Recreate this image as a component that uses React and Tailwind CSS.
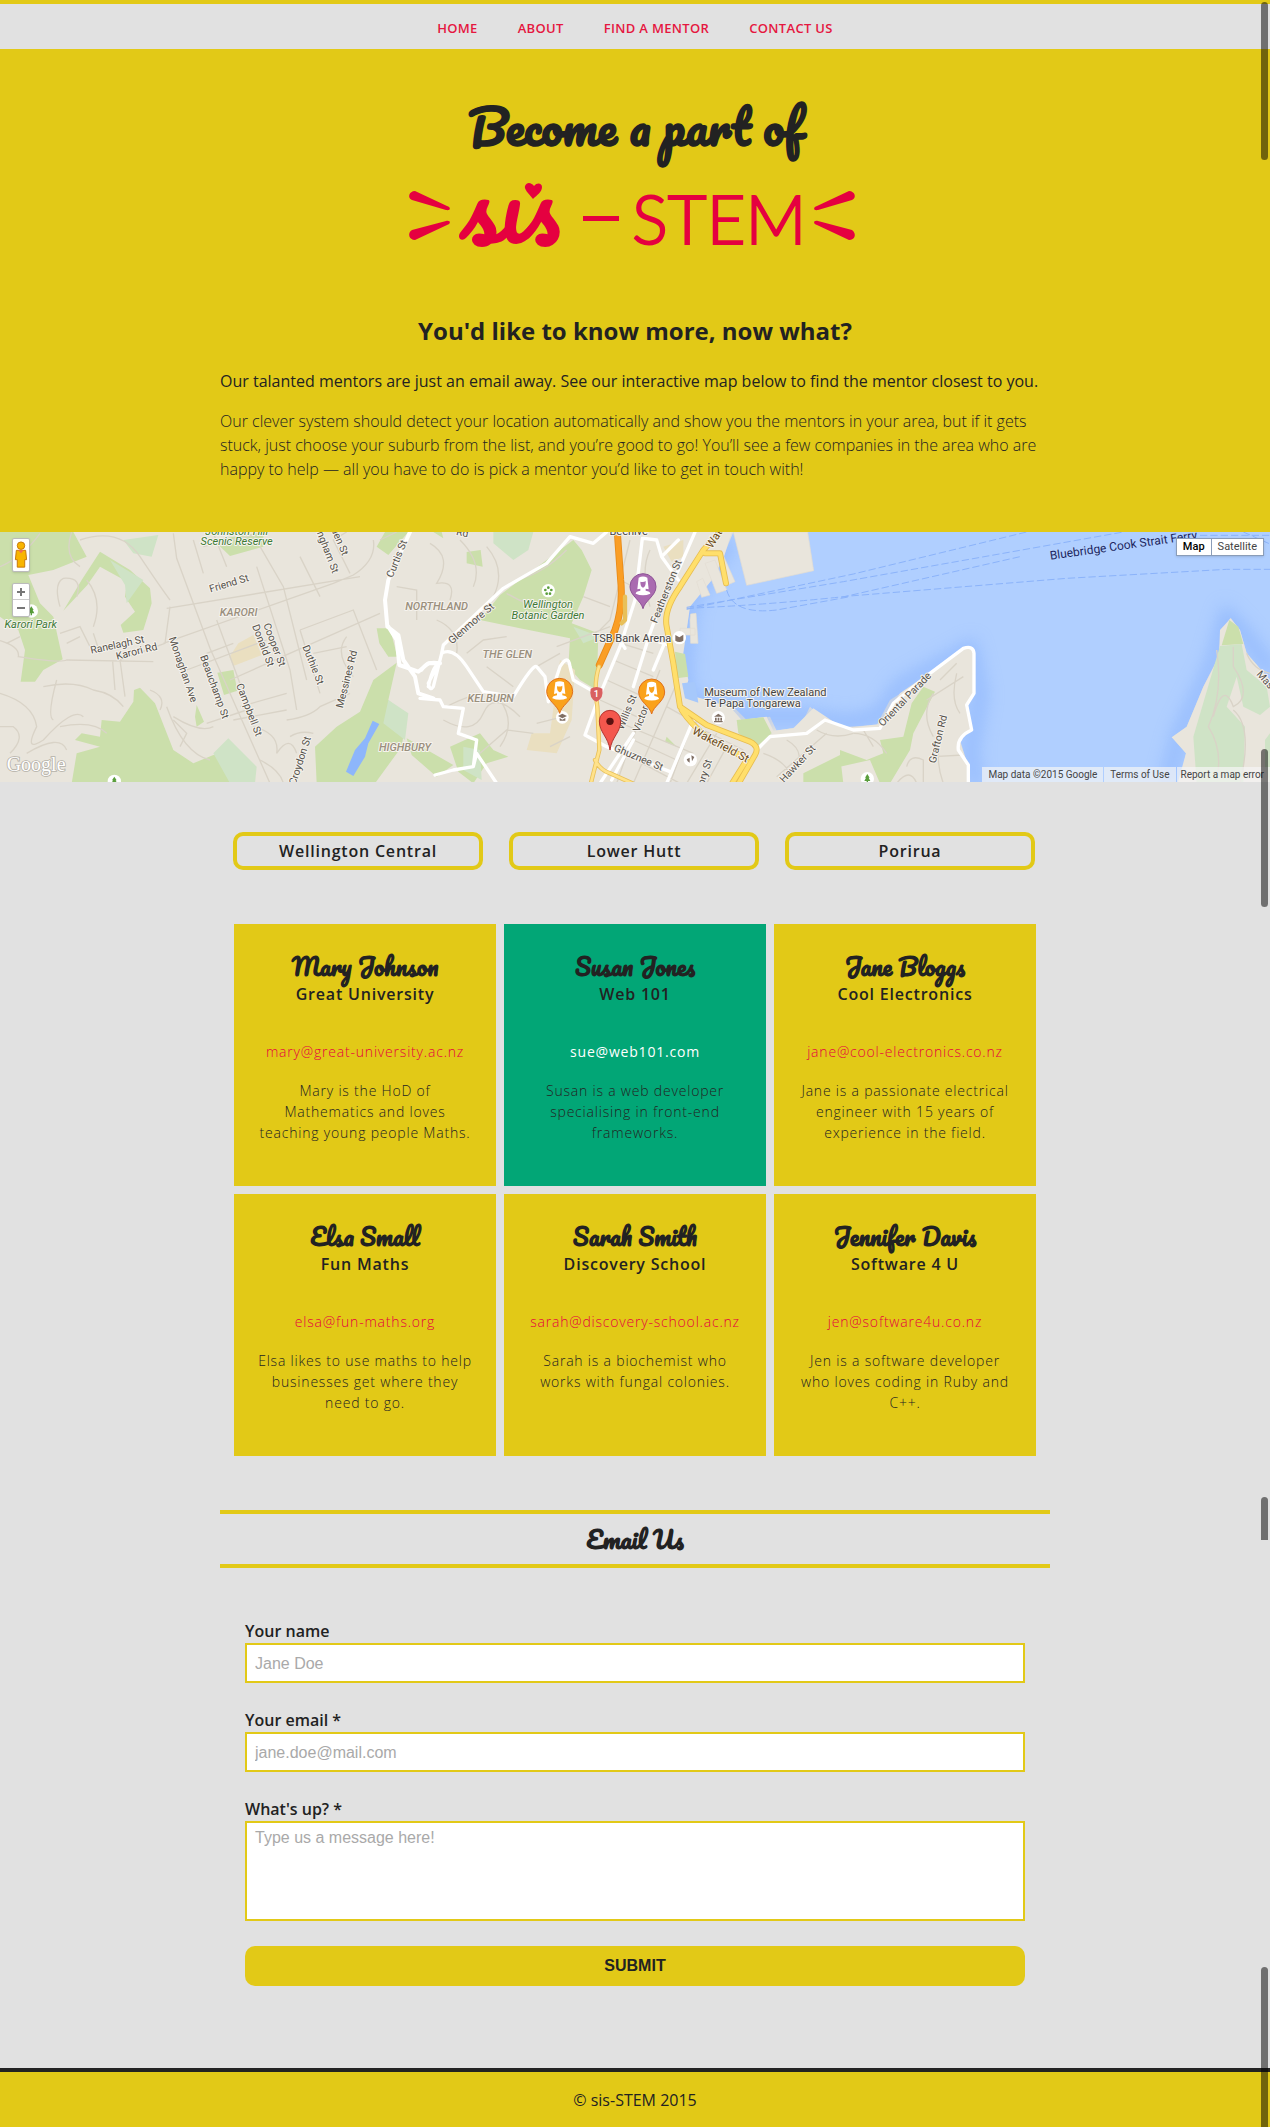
import React from "react";

const NAV = ["Home", "About", "Find a mentor", "Contact us"];
const AREAS = ["Wellington Central", "Lower Hutt", "Porirua"];
const MENTORS = [
  { name: "Mary Johnson", org: "Great University", email: "mary@great-university.ac.nz", bio: "Mary is the HoD of Mathematics and loves teaching young people Maths." },
  { name: "Susan Jones", org: "Web 101", email: "sue@web101.com", bio: "Susan is a web developer specialising in front-end frameworks.", active: true },
  { name: "Jane Bloggs", org: "Cool Electronics", email: "jane@cool-electronics.co.nz", bio: "Jane is a passionate electrical engineer with 15 years of experience in the field." },
  { name: "Elsa Small", org: "Fun Maths", email: "elsa@fun-maths.org", bio: "Elsa likes to use maths to help businesses get where they need to go." },
  { name: "Sarah Smith", org: "Discovery School", email: "sarah@discovery-school.ac.nz", bio: "Sarah is a biochemist who works with fungal colonies." },
  { name: "Jennifer Davis", org: "Software 4 U", email: "jen@software4u.co.nz", bio: "Jen is a software developer who loves coding in Ruby and C++." },
];

const SCRIPT = "font-['Pacifico','Liberation_Serif',serif] font-bold tracking-normal";

function Logo() {
  return (
    <svg viewBox="0 0 454 68" className="h-[68px] w-[454px] overflow-visible" role="img" aria-label="sis-STEM" fill="#e50040">
      <path d="M7 8 C1 8 -1 15 4 17 L38 27 C43 28 43 24 39 23 Z" />
      <path d="M7 57 C1 57 -1 50 4 47 L38 38 C43 37 43 41 39 42 Z" />
      <path d="M441 8 C447 8 449 15 444 17 L410 27 C405 28 405 24 409 23 Z" />
      <path d="M441 57 C447 57 449 51 444 47 L410 38 C405 37 405 41 409 42 Z" />
      <path d="M125 16 C120 10 116 6 117 3 C119 -2 124 0 126 3 C129 -1 134 0 134 4 C134 9 129 12 125 16 Z" />
      <rect x="175" y="33" width="36" height="5" />
      <text x="52" y="61" fontSize="94" fontFamily="Pacifico, 'Liberation Serif', serif">sıs</text>
      <text x="224" y="61" fontSize="67" fontFamily="Lato, sans-serif" fontWeight="300" stroke="#e50040" strokeWidth="2">STEM</text>
    </svg>
  );
}

const WEST_LABELS = [
  [710, 46, 0, "Johnston Hill", "park"], [710, 76, 0, "Scenic Reserve", "park"],
  [92, 325, 0, "Karori Park", "park"], [716, 288, 0, "KARORI", "area"],
  [690, 200, -17, "Friend St"], [354, 384, -12, "Ranelagh St"], [412, 404, -14, "Karori Rd"],
  [540, 452, 71, "Monaghan Ave"], [634, 504, 70, "Beauchamp St"], [738, 573, 69, "Campbell St"],
  [780, 380, 69, "Donald St"], [814, 378, 69, "Cooper St"], [930, 438, 68, "Duthie St"],
  [1050, 480, -76, "Messines Rd"], [910, 725, -72, "Croydon St"], [974, 100, 69, "ngham St"],
  [1010, 68, 67, "den St"], [1200, 120, -68, "Curtis St"],
];
const CENTRE_LABELS = [
  [50, 270, 0, "NORTHLAND", "area"], [262, 414, 0, "THE GLEN", "area"], [212, 547, 0, "KELBURN", "area"],
  [-45, 694, 0, "HIGHBURY", "area"], [384, 265, 0, "Wellington", "park"], [384, 298, 0, "Botanic Garden", "park"],
  [160, 318, -41, "Glenmore St"], [748, 218, -68, "Featherston St"], [636, 365, 0, "TSB Bank Arena", "place"],
  [1036, 528, 0, "Museum of New Zealand", "place"], [998, 560, 0, "Te Papa Tongarewa", "place"],
  [630, 580, -68, "Willis St"], [672, 600, -70, "Victor"], [652, 722, 23, "Ghuznee St"],
  [897, 684, 28, "Wakefield St", "road"], [892, 62, -58, "Wat", "road"], [626, 44, 0, "Beehive", "place"],
  [125, 48, 12, "Rd"], [864, 760, -72, "ory St"], [1140, 738, -47, "Hawker St"],
];
const EAST_LABELS = [
  [202, 545, -46, "Oriental Parade"], [304, 660, -76, "Grafton Rd"],
  [852, 88, -8, "Bluebridge Cook Strait Ferry", "sea"], [1268, 486, 48, "Mas"],
];
const LABEL_STYLE = {
  street: { fill: "#55514a", size: 31 },
  area: { fill: "#9a8f7d", size: 33, italic: true, weight: 500 },
  park: { fill: "#3d7a35", size: 33, italic: true },
  place: { fill: "#444444", size: 33 },
  road: { fill: "#6b4a14", size: 34 },
  sea: { fill: "#1c2660", size: 36 },
};

function Labels({ items }) {
  return items.map(([x, y, r, text, kind = "street"]) => {
    const s = LABEL_STYLE[kind];
    return (
      <text key={text + x} transform={`translate(${x} ${y}) rotate(${r})`} textAnchor="middle" fontSize={s.size}
        fontStyle={s.italic ? "italic" : "normal"} fontWeight={s.weight || 400} fill={s.fill}
        stroke={kind === "sea" ? "#b3d1ff" : "#f6f3ee"} strokeWidth="6" strokeLinejoin="round" paintOrder="stroke">{text}</text>
    );
  });
}

function MentorPin({ x, y, fill, edge }) {
  return (
    <g transform={`translate(${x} ${y})`}>
      <path d="M0 64 C-5 40 -39 26 -39 -2 A39 39 0 0 1 39 -2 C39 26 5 40 0 64Z" fill={fill} stroke={edge} strokeWidth="3" />
      <path d="M-13 -29 Q0 -36 13 -29 L17 6 L8 4 L8 10 Q22 12 22 19 Q0 28 -22 19 Q-22 12 -8 10 L-8 4 L-17 6Z" fill="#fff" />
      <path d="M-8 -17 Q3 -15 8 -19 Q9 -2 0 1 Q-8 -1 -8 -17Z" fill={fill} />
    </g>
  );
}

function Tree({ x, y }) {
  return (
    <g transform={`translate(${x} ${y})`}>
      <circle r="20" fill="#fff" />
      <path d="M0 -14 L7 -3 H4 L9 7 H2 V13 H-2 V7 H-9 L-4 -3 H-7Z" fill="#5a9e3c" />
    </g>
  );
}

function MapDrawing() {
  return (
    <svg viewBox="0 36 3810 750" preserveAspectRatio="xMidYMid slice" className="block h-full w-full" fontFamily="Roboto, sans-serif" role="img" aria-label="Map of Wellington mentors">
      <defs>
        <filter id="shore" x="-20%" y="-20%" width="140%" height="140%"><feGaussianBlur stdDeviation="26" /></filter>
      </defs>
      <rect y="36" width="3810" height="750" fill="#e9e5dc" />

      {/* harbour */}
      <path d="M2200 36 L2170 110 L2140 170 L2070 250 L2060 330 L2040 390 L2040 430 L2060 480 L2040 540 L2100 560 L2200 560 L2240 600 L2310 590 L2330 632 L2400 620 L2430 560 L2480 605 L2540 620 L2630 615 L2670 540 L2790 465 L2850 420 L2900 378 L2925 390 L2920 520 L2900 560 L2915 630 L2880 660 L2905 740 L2905 790 L3540 790 L3558 700 L3517 652 L3560 620 L3610 500 L3655 410 L3665 330 L3692 293 L3720 330 L3740 400 L3810 480 L3810 36Z" fill="#b0cfff" />
      <g fill="none" stroke="#77a5fb" strokeWidth="42" opacity="0.5" filter="url(#shore)">
        <path d="M2190 60 L2070 250 L2050 440 L2060 540 L2240 590 L2420 590 L2540 610 L2640 590 L2700 500 L2910 385 L2940 520 L2910 700 L2930 800" />
        <path d="M3500 800 L3540 640 L3640 430 L3680 290 L3730 340 L3820 460" />
      </g>
      <path d="M2030 36 H2195 L2172 110 L2140 175 L2070 260 L2060 330 L2050 400 L2065 480 L2050 540 H1980 V36Z" fill="#e9e5dc" />
      <path d="M2905 800 L2905 740 L2878 660 L2915 630 L2900 560 L2925 520 L2925 390 L2900 378 L2850 420 L2780 465 L2700 520 L2640 612 L2530 625 L2440 565 L2380 625 L2320 632 L2300 590 L2225 600 L2190 560 L2050 520 L1980 500 V800Z" fill="#e9e5dc" />
      <path d="M3530 800 L3558 700 L3515 652 L3560 620 L3610 500 L3657 410 L3660 330 L3692 295 L3720 330 L3740 400 L3810 480 V800Z" fill="#e9e5dc" />
      <g fill="#e9e5dc" stroke="#e2ddd2" strokeWidth="2">
        <path d="M2200 36 H2423 L2441 152 L2240 196Z" />
        <path d="M2115 130 L2145 120 L2180 210 L2150 220Z M2090 185 L2108 175 L2130 225 L2105 232Z M2150 100 L2165 95 L2205 185 L2182 195Z M2072 282 L2088 280 L2094 370 L2072 370 L2070 300Z M2040 325 H2085 V345 H2040Z" />
      </g>
      <path d="M2046 490 L2085 485 L2095 548 L2055 535Z" fill="#a6c8fb" />
      <g fill="none" stroke="#8bb3fa" strokeWidth="3" strokeDasharray="22 9">
        <path d="M2060 268 L2560 162 L3080 36" /><path d="M2060 262 L2530 185 L3370 36" />
        <path d="M2524 232 L3060 110" /><path d="M2060 265 Q2300 255 2550 228 L3200 175 L3680 148 H3810" /><path d="M2180 210 Q2200 285 2330 270 L2550 230" />
        <path d="M3600 46 H3810 M3730 36 L3810 72" />
      </g>

      {/* parks */}
      <g fill="#cbdfab">
        <path d="M0 36 H220 L260 110 L160 150 L85 165 L120 250 L160 290 L188 418 L130 450 L105 485 L62 485 L75 390 L55 330 L0 290Z" />
        <path d="M300 95 L390 150 L450 205 L455 250 L430 330 L370 338 L362 315 L405 275 L375 230 L382 185 L300 140 L262 195 L190 272 L245 180Z" />
        <path d="M420 503 L465 550 L520 690 L580 730 L640 705 L690 700 L740 790 H215 L230 700 L300 680 L225 660 L245 640 L300 650 L305 600 L360 605 L400 545 L402 510Z" />
        <path d="M652 458 L700 450 L712 512 L672 525Z M590 555 L612 605 L590 620 L585 590Z M640 60 L790 36 L790 80 L690 108Z" />
        <path d="M1155 36 L1225 36 L1165 105 L1130 80Z M1130 325 L1170 325 L1192 410 L1165 410 L1138 370Z" />
        <path d="M1190 428 L1165 540 L1220 585 L1205 680 L1125 790 H950 L945 680 L1010 620 L1080 575 L1120 480Z M1220 655 L1360 735 L1310 770 L1235 705Z" />
        <path d="M1440 300 L1500 225 L1720 60 L1745 90 L1775 150 L1750 230 L1715 310 L1795 340 L1790 510 L1740 480 L1705 440 L1710 355 L1560 325Z" />
        <path d="M1400 96 L1442 90 L1448 140 L1400 130Z M1300 36 L1325 36 L1330 55Z M1350 680 L1440 640 L1480 690 L1525 710 L1460 730 L1420 790 L1375 755Z" />
        <path d="M2025 395 L2055 402 L2065 470 L2030 475Z M2210 600 L2290 592 L2315 640 L2270 680 L2215 640Z M2410 760 L2520 705 L2530 790 H2410Z M2000 650 L2030 680 L1995 665Z" />
        <path d="M2770 500 L2805 515 L2740 640 L2730 690 L2670 790 L2640 790 L2610 720 L2520 740 V690 L2600 720 L2650 700 L2640 660 L2710 650 L2735 550Z" />
        <path d="M3688 300 L3715 320 L3730 372 L3665 376Z" />
      </g>
      <g fill="#cfe3c6">
        <path d="M370 60 L475 45 L455 110 L400 100Z M330 120 L430 180 L380 250 L375 195Z M640 700 L685 655 L770 740 L765 790 H690Z M1165 540 L1225 580 L1215 660 L1150 610Z" />
        <path d="M1480 36 H1600 L1585 90 L1540 120 L1480 70Z M1390 680 L1440 690 L1445 780 L1390 750Z M1720 320 L1800 350 L1750 370Z" />
        <path d="M3660 378 L3725 372 L3740 450 L3800 500 L3810 560 L3780 585 L3730 560 L3710 470 L3680 560 L3735 620 L3730 790 H3590 L3580 650 L3630 480Z M3795 660 L3810 640 V790 L3795 740Z" />
      </g>
      <g fill="#eadfc0">
        <path d="M715 370 L760 345 L785 405 L700 438 L688 412Z" />
        <path d="M1680 420 L1725 450 L1715 600 L1670 700 L1580 690 L1595 640 L1650 640Z M1990 80 L2050 60 L2050 110 L2015 125Z" />
      </g>
      <path d="M1118 602 L1138 612 L1105 670 L1095 710 L1060 768 L1038 755 L1065 690 L1095 655Z" fill="#8db6fb" />

      {/* minor streets */}
      <g fill="none" stroke="#d9d3c7" strokeWidth="4">
        <path d="M0 362 Q60 380 55 410 Q180 430 200 420 L460 425 M520 40 L530 115 L630 385 L810 790 M650 300 L760 600 M610 80 L760 45 L850 200 L920 480 M770 140 L870 450 L890 570 M500 265 L1080 170 M490 370 L830 250 L1000 190 M560 450 L800 360 M620 400 L700 370 M690 480 L1140 280 M720 560 L860 520 M700 600 L860 570 M900 330 L1060 270 L1130 450 M900 330 L960 520 M940 400 L1040 380 M1000 190 L1060 165 Q1130 120 1120 60 M680 140 L640 40 M900 110 L960 230 M1040 36 L1000 60 L1050 160 M580 60 L610 160 M510 260 L495 370 L360 420 M360 420 L375 530 M338 425 L345 510" />
        <path d="M215 36 Q190 110 240 140 M240 60 Q360 20 420 110 T510 240 M120 40 Q70 110 0 140 M180 260 Q160 190 190 175 Q250 170 230 230 M260 180 Q310 240 280 320 M0 520 Q100 550 110 620 Q70 700 130 660 Q220 560 250 590 M130 500 Q220 480 280 510 Q340 520 370 560 M0 620 H40 Q80 650 30 700 M170 480 Q140 590 160 600 M500 560 Q550 700 630 720 M520 590 Q600 640 640 620 M450 510 Q500 530 480 570 M180 620 Q280 600 320 640 M80 700 Q180 640 200 690 M180 340 L240 320 L270 380 M200 370 L240 350 M280 340 L300 400 M60 350 L20 370" />
        <path d="M760 620 Q840 640 830 700 Q870 640 890 700 M860 600 Q930 590 960 560 L1050 520 M870 650 Q900 630 940 640 M780 720 Q840 750 850 790 M620 610 L740 570 M520 600 L560 640 L540 680 M1190 200 L1250 210 V300 M1040 350 Q1000 400 1060 470 M1140 60 L1190 36" />
        <path d="M1290 70 Q1360 110 1310 190 Q1370 180 1350 240 M1380 60 Q1450 130 1420 200 M1460 80 Q1520 150 1480 230 M1310 300 Q1380 330 1370 400 M1340 560 Q1450 500 1520 530 M1330 600 Q1420 650 1450 580 T1560 590 M1500 540 Q1550 610 1500 680 M1460 440 L1540 500 M1400 400 L1450 360 L1520 350 M1700 90 Q1630 160 1550 180 M1520 220 Q1600 270 1680 260 M1670 380 L1830 320 M1610 440 L1680 400 M1610 610 L1690 590 M1650 680 L1710 650 M1750 230 L1830 260 M1440 700 L1520 630 L1600 640" />
        <path d="M1890 60 L1830 300 L1800 330 M1950 90 Q1920 150 1950 260 M1860 180 L1920 210 M1830 360 L1960 400 M1840 420 L1960 470 M1820 480 L1930 530 M1800 540 L1910 590 M1840 600 L2080 700 M1870 700 L2040 790 M1900 660 L2030 720 M1950 500 L1850 790 M2030 490 L1900 790 M1980 450 L1900 650 M2080 600 L2010 790 M2150 640 L2060 790 M2000 560 L2090 610 M2180 680 L2120 790 M2110 630 L2230 690 M2360 660 Q2430 700 2370 770 M2290 700 Q2350 720 2370 760 M2450 630 Q2500 660 2560 640 M2330 770 L2480 640" />
        <path d="M2560 640 Q2620 640 2660 700 M2800 520 Q2760 580 2800 650 M2870 460 Q2850 540 2880 580 M2820 480 L2870 430 M2780 540 L2890 470 M2830 630 Q2800 710 2830 790 M2720 740 Q2730 700 2770 720 V790 M2690 790 Q2730 740 2750 790 M2590 630 L2620 680 M2800 710 L2890 705 M3650 390 Q3670 520 3625 620 Q3670 690 3650 780 M3700 380 V440 Q3760 530 3700 560 Q3670 480 3640 590 M3740 400 Q3760 450 3810 460 M3700 570 Q3760 620 3720 790" />
      </g>

      {/* main roads */}
      <g fill="none" stroke="#fff" strokeLinejoin="round" strokeLinecap="round">
        <path strokeWidth="12" d="M1230 36 L1165 180 L1155 240 L1162 320 L1195 345 L1210 420 L1245 470 L1255 520 L1300 535 M1165 320 L1190 360 L1198 435 L1255 455 L1285 430 L1320 430" />
        <path strokeWidth="10" d="M1285 500 Q1300 430 1320 430 M1265 450 Q1280 420 1320 430 L1310 440 L1285 490 Q1290 515 1300 500 L1325 400 Q1360 380 1400 440 L1450 515 L1540 530 Q1600 430 1610 440 L1635 470 L1645 545 M1325 400 L1330 375 L1510 205 L1640 130 L1710 50 L1780 70 L1820 36 M1260 535 L1320 540 L1330 560 L1390 565 L1375 640 L1430 660 L1420 740 L1360 750 L1305 765 M1420 740 L1430 700 L1490 790 M1645 545 L1680 440 Q1705 400 1710 440 L1720 480 L1790 520" />
        <path strokeWidth="10" d="M1927 55 L1905 240 L1860 380 L1795 535 L1755 645 L1820 680 L2010 755 M2085 36 L2040 140 L1975 270 L1950 340 L1900 500 M1990 378 L1960 450 M1900 640 L1800 790 M1860 360 L1875 385 M1960 360 L2005 375 M1932 55 L1970 60 L1985 110 L2035 180 M1985 110 L2035 60 M2080 600 L2000 790 M1835 780 L1900 660" />
        <path strokeWidth="10" d="M2270 690 L2310 650 L2420 640 L2475 600 L2560 630 L2640 625 L2680 550 L2790 460 L2890 385 Q2920 375 2922 400 V520 L2900 555 L2915 630 Q2870 650 2875 690 L2905 735 V790" />
      </g>
      <g fill="none" strokeLinejoin="round" strokeLinecap="round">
        <path d="M1852 36 L1862 180 Q1870 260 1845 330 L1798 435" stroke="#e88a18" strokeWidth="21" />
        <path d="M1852 36 L1862 180 Q1870 260 1845 330 L1798 435" stroke="#fa9e25" strokeWidth="16" />
        <path d="M1875 230 V300 L1865 310 M1797 440 Q1780 490 1792 560 L1798 690 L1770 800 M1785 720 Q1800 750 1830 760 L1920 800" stroke="#e8c05a" strokeWidth="13" />
        <path d="M1797 440 Q1780 490 1792 560 L1798 690 L1770 800 M1785 720 Q1800 750 1830 760 L1920 800" stroke="#ffe28a" strokeWidth="8" />
        <path d="M2160 36 L2110 90 L2040 200 Q1990 270 2000 320 L2020 430 L2040 560 L2120 615 L2250 665 Q2280 680 2265 705 L2210 800 M2045 570 Q2070 610 2130 660 L2210 700 L2240 720 L2190 800 M2115 100 L2160 100 L2178 190" stroke="#e7bd50" strokeWidth="18" />
        <path d="M2160 36 L2110 90 L2040 200 Q1990 270 2000 320 L2020 430 L2040 560 L2120 615 L2250 665 Q2280 680 2265 705 L2210 800 M2045 570 Q2070 610 2130 660 L2210 700 L2240 720 L2190 800 M2115 100 L2160 100 L2178 190" stroke="#ffdf6b" strokeWidth="13" />
      </g>

      <Tree x={94} y={273} /><Tree x={343} y={784} /><Tree x={2602} y={776} />
      <Labels items={WEST_LABELS} />
      <g transform="translate(1260 0)">
        <Labels items={CENTRE_LABELS} />
        <g fill="#fff"><circle cx="385" cy="212" r="20" /><circle cx="778" cy="353" r="20" /><circle cx="895" cy="593" r="20" /><circle cx="811" cy="719" r="20" /><circle cx="427" cy="592" r="19" /></g>
        <g fill="#5a9e3c"><circle cx="385" cy="203" r="4" /><circle cx="376" cy="210" r="4" /><circle cx="394" cy="210" r="4" /><circle cx="380" cy="221" r="4" /><circle cx="390" cy="221" r="4" /></g>
        <path d="M766 345 L778 352 L790 344 V362 Q778 370 766 362Z M882 590 L895 581 L908 590Z M885 593 H890 V602 H885Z M893 593 H898 V602 H893Z M901 593 H906 V602 H901Z M882 603 H908 V607 H882Z M414 588 L427 581 L441 588 L427 595Z M419 594 L427 599 L436 594 V602 H419Z M800 718 L809 713 V728 L803 724Z M814 706 L823 711 L816 724Z" fill="#806f64" />
        <path d="M512 506 Q529 496 547 506 Q552 535 529 545 Q506 535 512 506Z" fill="#d95f60" />
        <text x="529" y="532" fontSize="28" fontWeight="500" textAnchor="middle" fill="#fff">1</text>
        <MentorPin x={669} y={202} fill="#aa6bb0" edge="#8d5296" />
        <MentorPin x={419} y={516} fill="#faa21b" edge="#e0701c" />
        <MentorPin x={695} y={518} fill="#faa21b" edge="#e0701c" />
        <path d="M570 690 C565 650 538 638 538 603 A32 32 0 0 1 602 603 C602 638 575 650 570 690Z" fill="#f4574d" stroke="#b23430" strokeWidth="3" />
        <circle cx="570" cy="604" r="11" fill="#5b1110" />
      </g>
      <g transform="translate(2520 0)"><Labels items={EAST_LABELS} /></g>
      <text x="20" y="754" fontFamily="'Liberation Serif', serif" fontSize="60" fill="#fff" stroke="#b5b1a8" strokeWidth="5" paintOrder="stroke">Google</text>
    </svg>
  );
}

function Scrollbar({ className }) {
  return <div aria-hidden="true" className={"absolute right-0.5 z-10 w-[7px] bg-black/50 " + className} />;
}

function MapSection() {
  return (
    <section className="relative h-[250px] overflow-hidden font-['Roboto',sans-serif] text-[#444]">
      <MapDrawing />
      <button aria-label="Street view" className="absolute top-1.5 left-3 flex h-[34px] w-[18px] items-center justify-center rounded-xs border border-[#bbb] bg-white shadow-sm">
        <svg viewBox="0 0 14 30" className="h-[28px] w-[14px]" fill="#f8b500" stroke="#c47508" strokeWidth="1">
          <path d="M2 10 H12 L13 20 H11 V28 H3 V20 H1Z" /><circle cx="7" cy="5" r="4" /><path d="M4 10 H10 L7 13Z" fill="#f26d5b" stroke="none" />
        </svg>
      </button>
      <div className="absolute top-[51px] left-3 flex w-[18px] flex-col divide-y divide-[#ccc] rounded-xs border border-[#bbb] bg-white shadow-sm">
        <button aria-label="Zoom in" className="flex h-4 items-center justify-center"><svg viewBox="0 0 8 8" className="size-2" stroke="#777" strokeWidth="2"><path d="M0 4H8M4 0V8" /></svg></button>
        <button aria-label="Zoom out" className="flex h-4 items-center justify-center"><svg viewBox="0 0 8 8" className="size-2" stroke="#777" strokeWidth="2"><path d="M0 4H8" /></svg></button>
      </div>
      <div className="absolute top-1.5 right-1.5 flex h-[18px] border border-[#8b9db8] bg-white text-[11px] leading-4 shadow-sm">
        <button className="border-r border-[#8b9db8] px-1.5 font-medium text-black">Map</button>
        <button className="px-1.5">Satellite</button>
      </div>
      <div className="absolute right-0 bottom-0 flex h-[15px] gap-px text-[10px] leading-[15px]">
        <span className="bg-[#f5f5f5]/70 px-1.5">Map data ©2015 Google</span>
        <a href="#terms" className="bg-[#f5f5f5]/70 px-1.5">Terms of Use</a>
        <a href="#report" className="bg-[#f5f5f5]/70 pr-1.5 pl-1">Report a map error</a>
      </div>
    </section>
  );
}

function Field({ id, label, area, ...rest }) {
  const box = "block w-full border-2 border-[#e2c917] bg-white px-2 font-['Liberation_Sans',sans-serif] text-base placeholder:text-[#a9a9a9]";
  return (
    <div className="flex flex-col">
      <label htmlFor={id} className="text-base leading-6 font-semibold">{label}</label>
      {area ? <textarea id={id} className={box + " h-[100px] resize-none py-[3px]"} {...rest} /> : <input id={id} className={box + " h-10 pt-0.5"} {...rest} />}
    </div>
  );
}

export default function App() {
  return (
    <div className="relative bg-[#e1e1e1] font-['Open_Sans',sans-serif] text-[#222]">
      <Scrollbar className="top-0.5 h-[158px] rounded-full" />
      <Scrollbar className="top-[749px] h-[158px] rounded-full" />
      <Scrollbar className="top-[1497px] h-[43px] rounded-t-full" />
      <Scrollbar className="bottom-0 h-[160px] rounded-t-full" />

      <nav className="flex h-[49px] items-center justify-center gap-10 border-t-4 border-[#e2c917] pt-1 text-[13px] font-semibold tracking-wide text-[#e5173f] uppercase">
        {NAV.map((n) => <a key={n} href={"#" + n.toLowerCase().replaceAll(" ", "-")}>{n}</a>)}
      </nav>

      <header className="flex flex-col items-center bg-[#e2c917] px-5 pt-[43px] pb-[51px]">
        <h1 className={SCRIPT + " text-[47px] leading-[68px]"}>Become a part of</h1>
        <div className="mt-[23px]"><Logo /></div>
        <h2 className="mt-16 text-2xl leading-8 font-bold">You'd like to know more, now what?</h2>
        <div className="w-full max-w-[830px] pt-[22px] text-base leading-6">
          <p className="font-medium">Our talanted mentors are just an email away. See our interactive map below to find the mentor closest to you.</p>
          <p className="mt-4 font-light">Our clever system should detect your location automatically and show you the mentors in your area, but if it gets stuck, just choose your suburb from the list, and you’re good to go! You’ll see a few companies in the area who are happy to help — all you have to do is pick a mentor you’d like to get in touch with!</p>
        </div>
      </header>

      <MapSection />

      <main className="mx-auto max-w-[830px] pt-[50px] pb-[82px] text-base">
        <div className="mr-[15px] ml-[13px] grid grid-cols-3 gap-[26px]">
          {AREAS.map((a) => (
            <button key={a} className="h-[38px] rounded-[10px] border-4 border-[#e2c917] text-base leading-6 font-semibold tracking-wider">{a}</button>
          ))}
        </div>

        <div className="mx-3.5 mt-[54px] grid grid-cols-3 gap-2 tracking-wider">
          {MENTORS.map((m) => (
            <article key={m.name} className={"h-[262px] px-5 pt-6 text-center " + (m.active ? "bg-[#02a676]" : "bg-[#e2c917]")}>
              <h3 className={SCRIPT + " text-[23px] leading-9"}>{m.name}</h3>
              <h4 className="text-base leading-5 font-semibold">{m.org}</h4>
              <a href={"mailto:" + m.email} className={"mt-[38px] block text-sm leading-5 whitespace-nowrap " + (m.active ? "font-medium text-white" : "font-light text-[#e50040]")}>{m.email}</a>
              <p className="mt-[18px] text-sm leading-[21px] font-light">{m.bio}</p>
            </article>
          ))}
        </div>

        <h2 className={SCRIPT + " mt-[54px] border-y-4 border-[#e2c917] text-center text-2xl leading-[50px]"}>Email Us</h2>

        <form className="mx-[25px] mt-[51px] flex flex-col gap-[25px]" onSubmit={(e) => e.preventDefault()}>
          <Field id="name" label="Your name" type="text" placeholder="Jane Doe" />
          <Field id="email" label="Your email *" type="email" placeholder="jane.doe@mail.com" />
          <Field id="message" label="What's up? *" area placeholder="Type us a message here!" />
          <button type="submit" className="h-10 rounded-[10px] bg-[#e2c917] font-['Liberation_Sans',sans-serif] text-base font-bold">SUBMIT</button>
        </form>
      </main>

      <footer className="border-t-4 border-[#222] bg-[#e2c917] pt-4 pb-[15px] text-center text-base leading-6">© sis-STEM 2015</footer>
    </div>
  );
}
